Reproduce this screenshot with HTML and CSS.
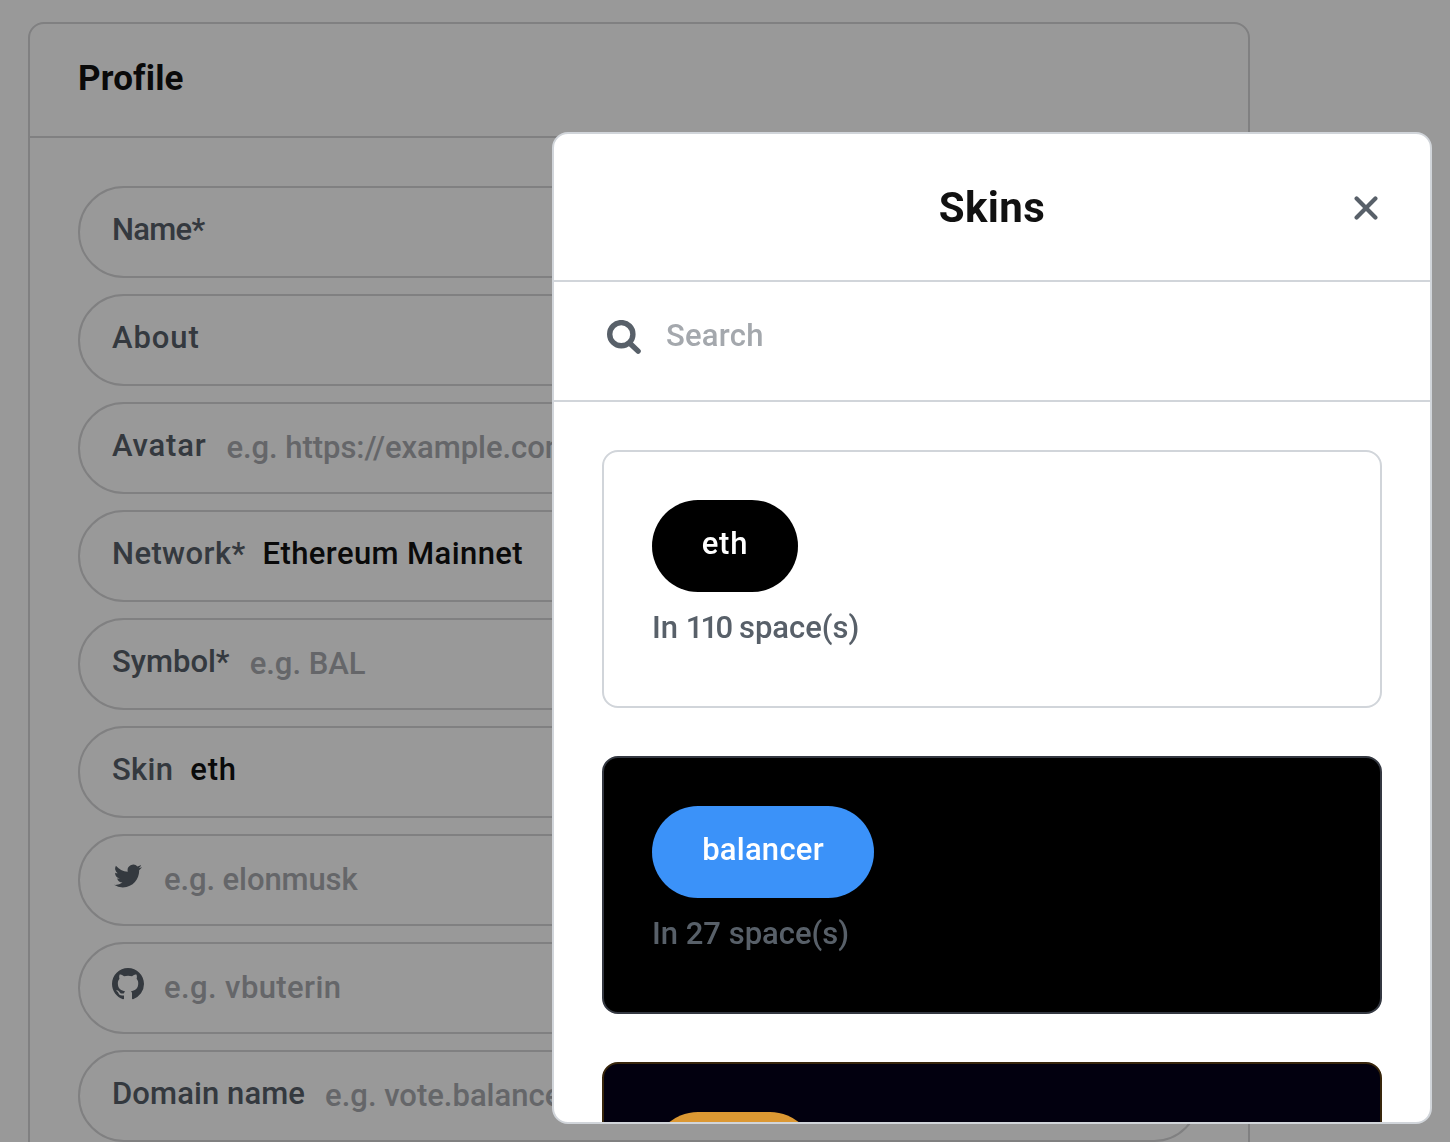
FILE: index.html
```html
<!DOCTYPE html>
<html lang="en">
<head>
<meta charset="utf-8">
<title>Profile settings</title>
<link rel="stylesheet" href="styles.css">
</head>
<body>
<main class="page">
  <section class="panel">
    <header class="panel-header"><h4 class="panel-title">Profile</h4></header>
    <div class="fields">
      <div class="field"><span class="label t-name">Name*</span></div>
      <div class="field"><span class="label t-about">About</span></div>
      <div class="field"><span class="label t-avatar">Avatar</span><span class="hint t-url">e.g. https://example.com/space.png</span></div>
      <div class="field"><span class="label t-network">Network*</span><span class="value t-mainnet">Ethereum Mainnet</span></div>
      <div class="field"><span class="label t-symbol">Symbol*</span><span class="hint t-bal">e.g. BAL</span></div>
      <div class="field"><span class="label t-skin">Skin</span><span class="value t-eth">eth</span></div>
      <div class="field">
        <svg class="social twitter" viewBox="0 0 24 24"><path d="M23.95 4.57a10 10 0 0 1-2.82.77 4.96 4.96 0 0 0 2.16-2.72c-.95.55-2 .96-3.13 1.18a4.92 4.92 0 0 0-8.38 4.48C7.69 8.09 4.07 6.13 1.64 3.16a4.93 4.93 0 0 0 1.52 6.57 4.9 4.9 0 0 1-2.23-.61v.06a4.92 4.92 0 0 0 3.95 4.83 5 5 0 0 1-2.21.08 4.94 4.94 0 0 0 4.6 3.42A9.87 9.87 0 0 1 0 19.54a13.99 13.99 0 0 0 7.56 2.21c9.05 0 14-7.5 14-13.98 0-.21 0-.42-.02-.63a9.94 9.94 0 0 0 2.46-2.55z"/></svg>
        <span class="hint t-elon">e.g. elonmusk</span>
      </div>
      <div class="field">
        <svg class="social github" viewBox="0 0 16 16"><path fill-rule="evenodd" d="M8 0C3.58 0 0 3.58 0 8c0 3.54 2.29 6.53 5.47 7.59.4.07.55-.17.55-.38 0-.19-.01-.82-.01-1.49-2.01.37-2.53-.49-2.69-.94-.09-.23-.48-.94-.82-1.13-.28-.15-.68-.52-.01-.53.63-.01 1.08.58 1.23.82.72 1.21 1.87.87 2.33.66.07-.52.28-.87.51-1.07-1.78-.2-3.64-.89-3.64-3.95 0-.87.31-1.59.82-2.15-.08-.2-.36-1.02.08-2.12 0 0 .67-.21 2.2.82.64-.18 1.32-.27 2-.27s1.36.09 2 .27c1.53-1.04 2.2-.82 2.2-.82.44 1.1.16 1.92.08 2.12.51.56.82 1.27.82 2.15 0 3.07-1.87 3.75-3.65 3.95.29.25.54.73.54 1.48 0 1.07-.01 1.93-.01 2.2 0 .21.15.46.55.38A8.01 8.01 0 0 0 16 8c0-4.42-3.58-8-8-8z"/></svg>
        <span class="hint t-vb">e.g. vbuterin</span>
      </div>
      <div class="field"><span class="label t-domain">Domain name</span><span class="hint t-vote">e.g. vote.balancer.fi</span></div>
    </div>
  </section>
</main>
<div class="backdrop"></div>
<div class="modal" role="dialog">
  <header class="modal-header">
    <h3 class="modal-title">Skins</h3>
    <svg class="close" viewBox="0 0 24 24"><path d="M2.6 2.6 21.4 21.4M21.4 2.6 2.6 21.4"/></svg>
  </header>
  <div class="search">
    <svg class="search-icon" viewBox="0 0 34 34"><circle cx="14.3" cy="14.2" r="11.6"/><path d="M22.8 23.2 31.1 31.1"/></svg>
    <span class="search-text">Search</span>
  </div>
  <div class="skins">
    <article class="skin skin-eth"><span class="button t-eth">eth</span><p class="count">In <span class="t-110">110</span> space(s)</p></article>
    <article class="skin skin-balancer"><span class="button t-btn-bal">balancer</span><p class="count">In 27 space(s)</p></article>
    <article class="skin skin-gold"><span class="button"></span></article>
  </div>
</div>
</body>
</html>
```
FILE: styles.css
```css
* { box-sizing: border-box; }
html, body { height: 100%; overflow: hidden; }
body {
  margin: 0;
  background: #fff;
  color: #111;
  font: 500 31px/46px Roboto, "Liberation Sans", sans-serif;
  white-space: nowrap;
}
h3, h4, p { margin: 0; }
.page { height: 1142px; padding: 22px 0 0 28px; overflow: hidden; }
.panel { width: 1222px; height: 1300px; border: 2px solid #d5d5d7; border-radius: 16px; }
.panel-header { height: 114px; padding: 32px 48px 0; border-bottom: 2px solid #d5d5d7; }
.panel-title { font-size: 35px; line-height: 46px; font-weight: 700; letter-spacing: .15px; }
.fields { display: flex; flex-direction: column; gap: 16px; padding: 48px; }
.field {
  display: flex;
  flex: none;
  height: 92px;
  padding: 19px 32px 0;
  border: 2px solid #d5d5d7;
  border-radius: 46px;
  overflow: hidden;
}
.label { color: #586069; margin-right: 20px; }
.value { margin-left: -3px; }
.hint { color: #a8abaf; padding-top: 2px; }
.social { fill: #586069; flex: none; }
.twitter { width: 28px; height: 28px; margin: 7px 22px 0 2px; }
.github { width: 32px; height: 32px; margin: 5px 20px 0 0; }

/* Tracking per text */
.t-name { letter-spacing: -.7px; }
.t-about { letter-spacing: .9px; }
.t-avatar { letter-spacing: .8px; }
.t-url { letter-spacing: -.05px; }
.t-network { letter-spacing: .4px; }
.t-mainnet { letter-spacing: .4px; }
.t-skin { letter-spacing: .3px; }
.t-eth { letter-spacing: .8px; }
.t-elon { letter-spacing: -.1px; }
.t-vb { letter-spacing: .4px; }
.t-domain { letter-spacing: .1px; }
.t-btn-bal { letter-spacing: .25px; }
.t-110 { letter-spacing: -2.8px; margin-right: 1px; }

.backdrop { position: fixed; inset: 0; background: rgba(0, 0, 0, .4); }
.modal {
  position: fixed;
  left: 552px;
  top: 132px;
  width: 880px;
  height: 992px;
  display: flex;
  flex-direction: column;
  border: 2px solid #d1d5da;
  border-radius: 16px;
  background: #fff;
  overflow: hidden;
}
.modal-header {
  display: grid;
  grid-template-columns: 1fr auto 1fr;
  align-items: center;
  flex: none;
  height: 148px;
  padding: 2px 52px 0;
  border-bottom: 2px solid #d1d5da;
}
.modal-title { grid-column: 2; font-size: 42px; font-weight: 700; letter-spacing: .4px; }
.close { justify-self: end; width: 24px; height: 24px; }
.close path { fill: none; stroke: #586069; stroke-width: 4.2; stroke-linecap: round; }
.search {
  display: flex;
  flex: none;
  height: 120px;
  padding: 31px 53px 0;
  gap: 25px;
  border-bottom: 2px solid #d1d5da;
}
.search-icon { width: 34px; height: 34px; margin-top: 7px; fill: none; stroke: #586069; stroke-width: 5.4; stroke-linecap: round; }
.search-text { color: #a4a8ad; letter-spacing: .25px; }
.skins { display: flex; flex-direction: column; gap: 48px; padding: 48px; }
.skin {
  flex: none;
  height: 258px;
  padding: 48px;
  border: 2px solid #d1d5da;
  border-radius: 16px;
}
.button {
  display: block;
  width: 146px;
  height: 92px;
  padding-top: 21px;
  border-radius: 46px;
  background: #000;
  color: #fff;
  text-align: center;
}
.count { margin-top: 13px; color: #586069; }
.skin-balancer { background: #000; border-color: #343841; }
.skin-balancer .button { width: 222px; background: #3b92f9; }
.skin-gold { background: #02000f; border-color: #38260c; }
.skin-gold .button { width: 164px; background: #dc9833; }
```
